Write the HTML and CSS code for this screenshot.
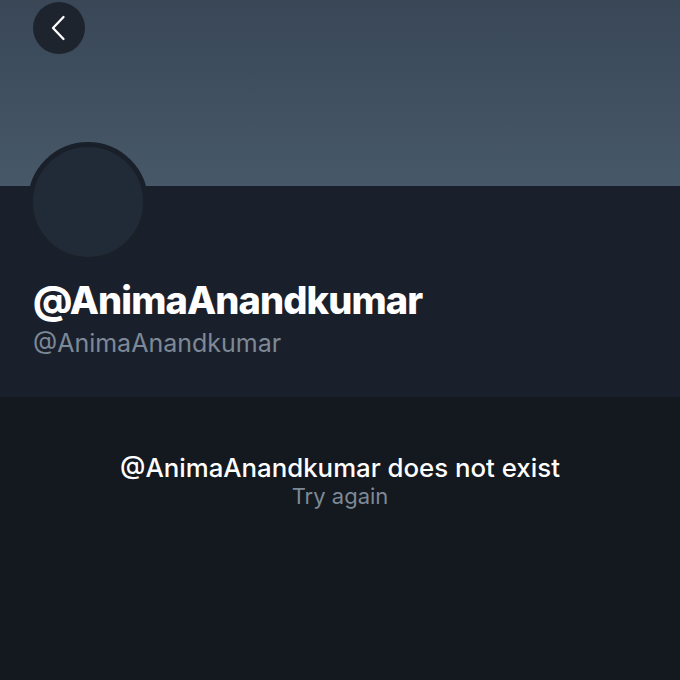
FILE: index.html
```html
<!DOCTYPE html>
<html>
<head>
<meta charset="utf-8">
<link rel="stylesheet" href="styles.css">
</head>
<body>
<div class="page">
  <header class="banner">
    <button class="back" aria-label="Back">
      <svg width="26" height="26" viewBox="0 0 26 26"><path d="M17.5 2 L7 13 L17.5 24" fill="none" stroke="#ffffff" stroke-width="2.3" stroke-linecap="round" stroke-linejoin="round"/></svg>
    </button>
  </header>
  <section class="profile">
    <div class="avatar"></div>
    <h1 class="name">@AnimaAnandkumar</h1>
    <div class="handle">@AnimaAnandkumar</div>
  </section>
  <section class="empty">
    <div class="msg">@AnimaAnandkumar does not exist</div>
    <div class="retry">Try again</div>
  </section>
</div>
</body>
</html>
```
FILE: styles.css
```css
html, body { margin: 0; padding: 0; }
body { background: #14181f; font-family: Inter, "Noto Sans", sans-serif; width: 680px; height: 680px; overflow: hidden; }
.page { display: flex; flex-direction: column; height: 680px; }
.banner { height: 186px; background: linear-gradient(#394757, #475869); padding: 2px 0 0 33px; box-sizing: border-box; }
.back { width: 52px; height: 52px; border-radius: 50%; background: #1e242d; border: none; padding: 0; display: flex; align-items: center; justify-content: center; }
.profile { height: 211px; background: #1a202b; position: relative; padding: 94px 0 0 33px; box-sizing: border-box; }
.avatar { position: absolute; left: 28px; top: -44px; width: 110px; height: 110px; border-radius: 50%; background: #212a37; border: 5px solid #19202a; }
.name { margin: 0; color: #ffffff; font-size: 38px; font-weight: 800; line-height: 40px; letter-spacing: -0.9px; }
.handle { margin-top: 8px; color: #7d8997; font-size: 25px; line-height: 30px; }
.empty { flex: 1; display: flex; flex-direction: column; align-items: center; padding-top: 57px; }
.msg { color: #ffffff; font-size: 25.8px; font-weight: 500; line-height: 28px; }
.retry { color: #7d8997; font-size: 22px; line-height: 28px; }
```
